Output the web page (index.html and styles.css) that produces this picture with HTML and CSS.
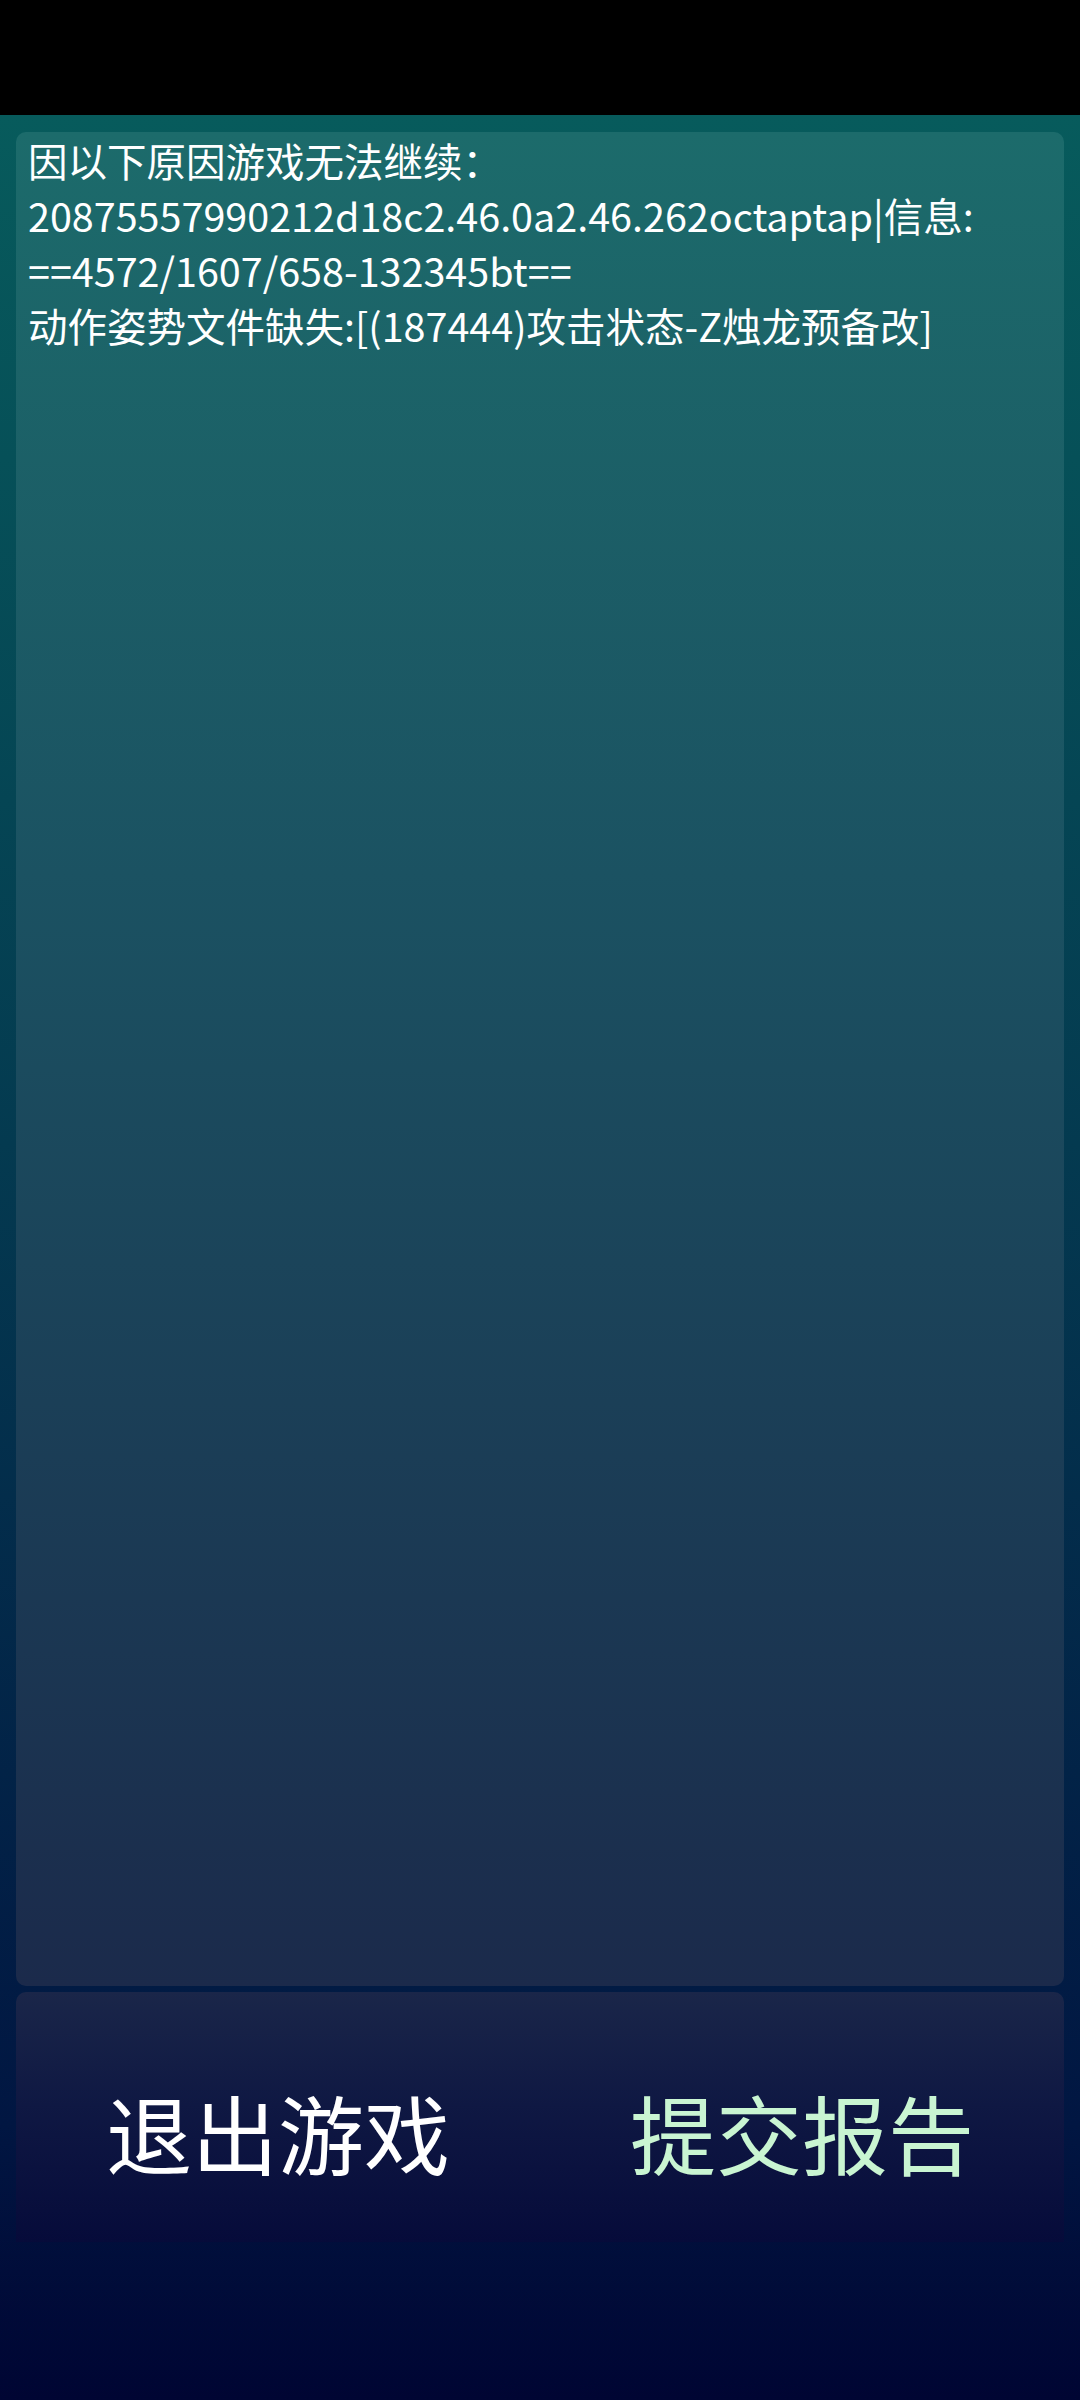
FILE: index.html
```html
<!DOCTYPE html>
<html lang="zh-CN">
<head>
<meta charset="utf-8">
<title>错误</title>
<link rel="stylesheet" href="styles.css">
</head>
<body>
<div class="statusbar"></div>
<main class="screen">
  <section class="log">
    <p>因以下原因游戏无法继续：</p>
    <p>20875557990212d18c2.46.0a2.46.262octaptap|信息:</p>
    <p>==4572/1607/658-132345bt==</p>
    <p>动作姿势文件缺失:[(187444)攻击状态-Z烛龙预备改]</p>
  </section>
  <section class="actions">
    <div class="btn btn-exit">退出游戏</div>
    <div class="btn btn-report">提交报告</div>
  </section>
</main>
</body>
</html>
```
FILE: styles.css
```css
html, body {
  margin: 0;
  padding: 0;
}
body {
  width: 1080px;
  height: 2400px;
  background: #000;
  font-family: "Noto Sans CJK SC", "Noto Sans", sans-serif;
  overflow: hidden;
}
.statusbar {
  height: 115px;
  background: #000;
}
.screen {
  height: 2285px;
  box-sizing: border-box;
  padding: 17px 16px 0 16px;
  display: flex;
  flex-direction: column;
  gap: 6px;
  background: linear-gradient(180deg, #075b5c 0%, #043a50 45%, #011642 88%, #000533 100%);
}
.log {
  height: 1854px;
  box-sizing: border-box;
  padding: 0 12px;
  border-radius: 10px;
  background: linear-gradient(180deg, #1c6b6b 0%, #1b5262 40%, #1b2a4b 100%);
  color: #fff;
  font-size: 39.5px;
  line-height: 55px;
}
.log p {
  margin: 0;
  white-space: nowrap;
}
.actions {
  height: 250px;
  border-radius: 10px 10px 0 0;
  background: linear-gradient(180deg, #1a2649 0%, #0f1843 45%, #060b3a 100%);
  display: flex;
  align-items: flex-start;
  padding-top: 97px;
  box-sizing: border-box;
}
.btn {
  flex: 1;
  text-align: center;
  font-size: 86px;
  line-height: 86px;
}
.btn-exit {
  color: #ffffff;
}
.btn-report {
  color: #c9f5d2;
}
```
